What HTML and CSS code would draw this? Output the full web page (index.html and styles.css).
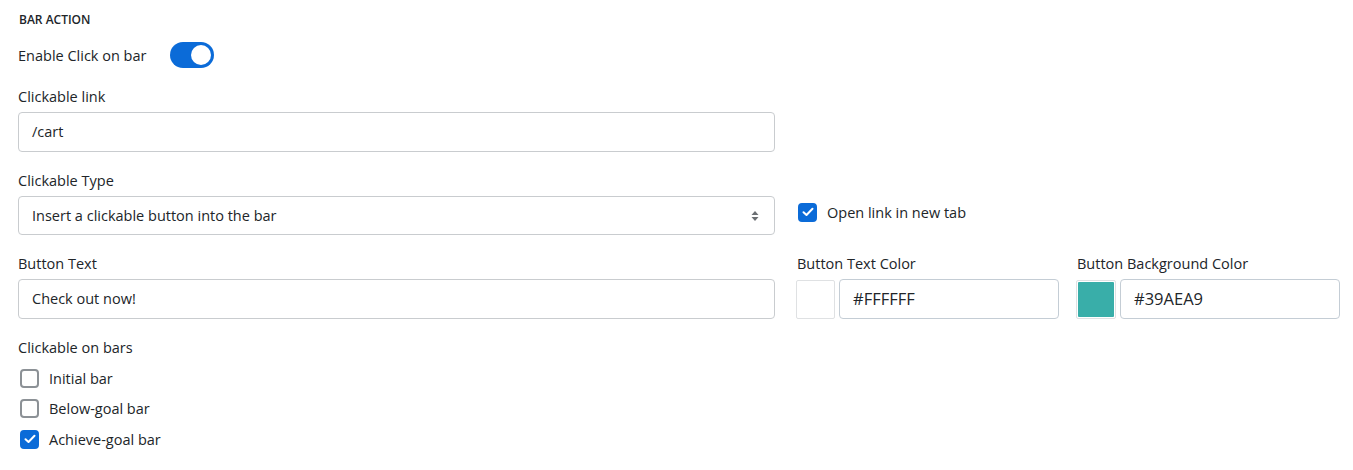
FILE: index.html
```html
<!DOCTYPE html>
<html lang="en">
<head>
<meta charset="utf-8">
<title>Bar Action</title>
<link rel="stylesheet" href="styles.css">
</head>
<body>
<div class="panel">
  <div class="heading">BAR ACTION</div>

  <div class="toggle-row">
    <span class="text">Enable Click on bar</span>
    <span class="switch"><span class="knob"></span></span>
  </div>

  <div class="field main-width">
    <div class="label">Clickable link</div>
    <div class="input">/cart</div>
  </div>

  <div class="row">
    <div class="field main-col">
      <div class="label">Clickable Type</div>
      <div class="input select">
        <span>Insert a clickable button into the bar</span>
        <svg class="caret" width="8" height="12" viewBox="0 0 8 12"><path d="M4 1 L7.5 5 H0.5 Z M4 11 L7.5 7 H0.5 Z" fill="#6b6f73"/></svg>
      </div>
    </div>
    <div class="side side-check">
      <label class="check-item">
        <span class="box checked"><svg width="12" height="10" viewBox="0 0 12 10"><path d="M1.5 5.2 L4.5 8 L10.5 1.8" fill="none" stroke="#fff" stroke-width="2" stroke-linecap="round" stroke-linejoin="round"/></svg></span>
        <span class="text">Open link in new tab</span>
      </label>
    </div>
  </div>

  <div class="row">
    <div class="field main-col">
      <div class="label">Button Text</div>
      <div class="input">Check out now!</div>
    </div>
    <div class="side">
      <div class="color-field">
        <div class="label">Button Text Color</div>
        <div class="color-row">
          <span class="swatch"><span class="fill white"></span></span>
          <div class="input color-input">#FFFFFF</div>
        </div>
      </div>
      <div class="color-field wide">
        <div class="label">Button Background Color</div>
        <div class="color-row">
          <span class="swatch"><span class="fill teal"></span></span>
          <div class="input color-input">#39AEA9</div>
        </div>
      </div>
    </div>
  </div>

  <div class="field">
    <div class="label">Clickable on bars</div>
    <div class="check-list">
      <label class="check-item"><span class="box"></span><span class="text">Initial bar</span></label>
      <label class="check-item"><span class="box"></span><span class="text">Below-goal bar</span></label>
      <label class="check-item"><span class="box checked"><svg width="12" height="10" viewBox="0 0 12 10"><path d="M1.5 5.2 L4.5 8 L10.5 1.8" fill="none" stroke="#fff" stroke-width="2" stroke-linecap="round" stroke-linejoin="round"/></svg></span><span class="text">Achieve-goal bar</span></label>
    </div>
  </div>
</div>
</body>
</html>
```

FILE: styles.css
```css
* { box-sizing: border-box; }
html, body { margin: 0; background: #fff; }
body {
  font-family: "Open Sans", "Noto Sans", "Liberation Sans", sans-serif;
  font-size: 14.5px;
  color: #212529;
}
.panel {
  padding: 12px 13px 0 18px;
}
.heading {
  font-size: 12px;
  font-weight: 600;
  line-height: 16px;
  padding-left: 1px;
}
.toggle-row {
  display: flex;
  align-items: center;
  gap: 24px;
  height: 26px;
  margin-top: 14px;
}
.switch {
  width: 44px;
  height: 26px;
  border-radius: 13px;
  background: #0b6bd8;
  display: flex;
  align-items: center;
  justify-content: flex-end;
  padding-right: 3px;
}
.knob {
  width: 20px;
  height: 20px;
  border-radius: 50%;
  background: #fff;
}
.field { margin-top: 19px; }
.main-width { width: 757px; }
.label {
  line-height: 20px;
  margin-bottom: 5px;
}
.input {
  height: 40px;
  border: 1px solid #c9cccf;
  border-radius: 4px;
  padding: 0 13px;
  display: flex;
  align-items: center;
  line-height: 20px;
}
.select { justify-content: space-between; height: 39px; padding-right: 15px; }
.caret { display: block; }
.row {
  display: flex;
  align-items: flex-start;
}
.main-col { width: 757px; flex: none; }
.side {
  display: flex;
  gap: 17px;
  margin-left: 21px;
  margin-top: 19px;
}
.side-check { padding-top: 31px; margin-left: 23px; }
.check-item {
  display: flex;
  align-items: center;
  gap: 10px;
  height: 20px;
}
.box {
  width: 19px;
  height: 19px;
  border: 2px solid #8c9196;
  border-radius: 4px;
  display: flex;
  align-items: center;
  justify-content: center;
  flex: none;
}
.box.checked {
  background: #0b6bd8;
  border-color: #0b6bd8;
}
.color-field { width: 263px; }
.color-field.wide { width: 264px; }
.color-field .label { padding-left: 1px; }
.color-row {
  display: flex;
  gap: 4px;
}
.swatch {
  width: 39px;
  height: 39px;
  border: 1px solid #dfe1e3;
  border-radius: 2px;
  padding: 1px;
  flex: none;
  margin-top: 1px;
}
.wide .swatch { width: 40px; }
.fill { display: block; width: 100%; height: 100%; border-radius: 1px; }
.fill.white { background: #fff; }
.fill.teal { background: #39aea9; }
.color-input {
  flex: 1;
  font-size: 16.5px;
  border-color: #c4cdd5;
}
.check-list {
  margin-top: 1px;
  display: flex;
  flex-direction: column;
}
.check-list .check-item {
  height: 30.5px;
  padding-left: 2px;
}
```
